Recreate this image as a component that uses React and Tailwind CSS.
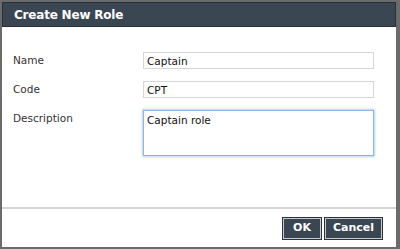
export default function App() {
  return (
    <div
      className="w-[400px] h-[249px] flex flex-col bg-white border-t-2 border-l-2 border-b-2 border-r-4 border-[#6b6b6b] text-[#333]"
      style={{ fontFamily: '"DejaVu Sans", "Liberation Sans", sans-serif' }}
    >
      {/* Title bar */}
      <div className="h-[25px] flex items-center px-[11px] bg-[#3b4653] border border-[#26303a] shrink-0">
        <span className="text-white text-[12px] font-bold tracking-[-0.2px]">Create New Role</span>
      </div>

      {/* Form */}
      <div className="flex-1 pt-[25px] pl-[11px] pr-[22px]">
        <div className="grid grid-cols-[130px_1fr] gap-y-[12px] items-start">
          <label className="text-[10.5px] pt-[1px]">Name</label>
          <input
            readOnly
            value="Captain"
            className="h-[17px] border border-[#d6d6d6] px-[3px] text-[10.5px] text-[#111] outline-none"
            style={{ fontFamily: "inherit" }}
          />
          <label className="text-[10.5px] pt-[1px]">Code</label>
          <input
            readOnly
            value="CPT"
            className="h-[17px] border border-[#d6d6d6] px-[3px] text-[10.5px] text-[#111] outline-none"
            style={{ fontFamily: "inherit" }}
          />
          <label className="text-[10.5px] pt-[1px]">Description</label>
          <textarea
            readOnly
            value="Captain role"
            className="h-[46px] resize-none border border-[#8db6e2] shadow-[0_0_2px_1px_#b9d4f0] px-[3px] pt-[2px] text-[10.5px] text-[#111] outline-none"
            style={{ fontFamily: "inherit" }}
          />
        </div>
      </div>

      {/* Footer */}
      <div className="border-t-2 border-[#d4d4d4] h-[40px] flex items-center justify-end gap-[4px] pr-[14px] shrink-0">
        <button className="h-[21px] w-[38px] bg-[#3b4653] border border-[#c9c9c9] outline outline-1 outline-[#2a333d] text-white text-[11px] font-bold">
          OK
        </button>
        <button className="h-[21px] w-[57px] bg-[#3b4653] border border-[#c9c9c9] outline outline-1 outline-[#2a333d] text-white text-[11px] font-bold">
          Cancel
        </button>
      </div>
    </div>
  );
}
